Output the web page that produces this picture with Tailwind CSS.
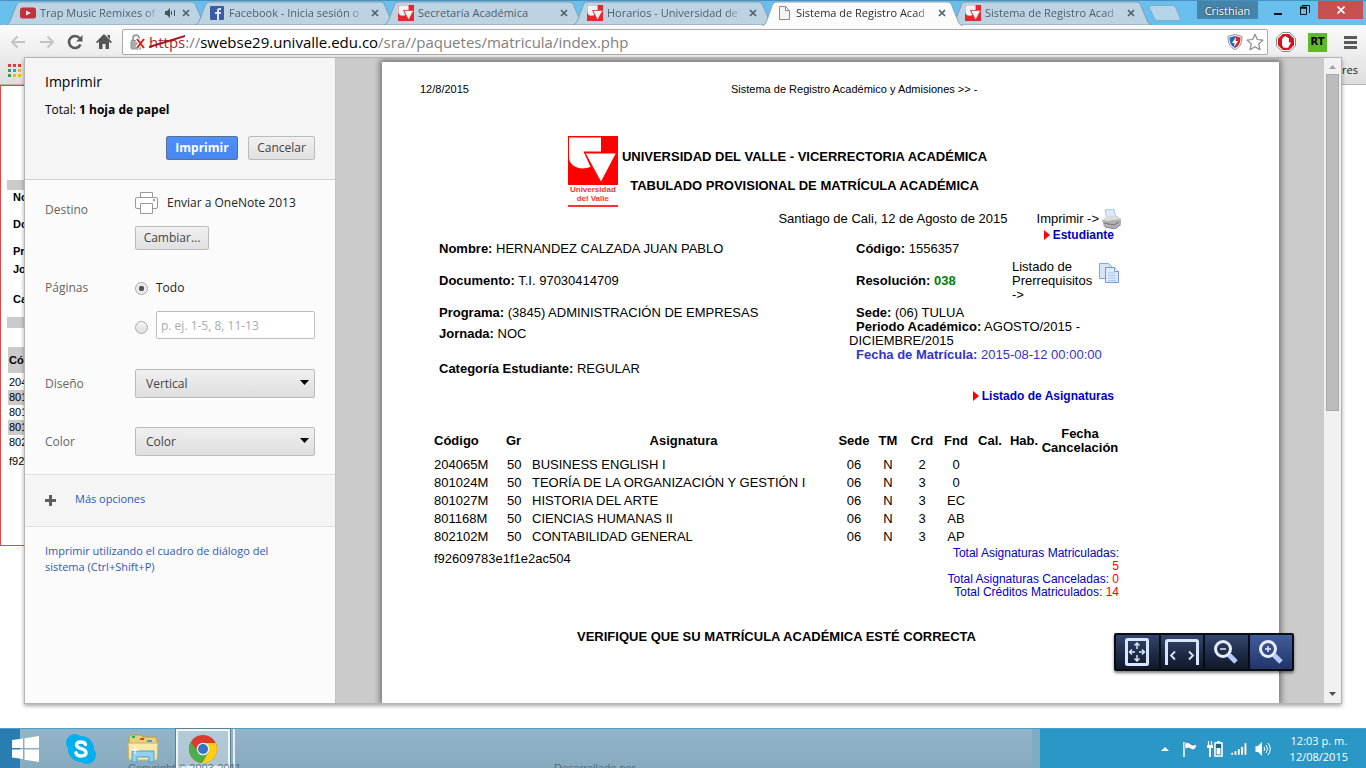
<!DOCTYPE html>
<html lang="es">
<head>
  <meta charset="UTF-8">
  <meta name="viewport" content="width=device-width, initial-scale=1.0">
  <title>Sistema de Registro Académico y Admisiones</title>
  <script src="https://cdn.jsdelivr.net/npm/@tailwindcss/browser@4"></script>
</head>
<body class="relative flex flex-col h-screen overflow-hidden bg-white font-['Open_Sans',sans-serif] text-[12px] text-black">

  <!-- Símbolos compartidos -->
  <svg class="hidden">
    <symbol id="tab-off" viewBox="0 0 201 24" preserveAspectRatio="none">
      <path d="M0 24 C3 23 4 21 5 18 L10 5 C11 2 12 1 15 1 H185 C188 1 189 2 190 5 L196 19 C197 22 198 23 201 24 Z" fill="#bcd3e4" stroke="#7f9fb5"/>
    </symbol>
    <symbol id="tab-on" viewBox="0 0 201 25" preserveAspectRatio="none">
      <path d="M0 25 C3 24 4 22 5 19 L10 5 C11 2 12 1 15 1 H185 C188 1 189 2 190 5 L196 20 C197 23 198 24 201 25 Z" fill="#fbfbfb"/>
      <path d="M0 25 C3 24 4 22 5 19 L10 5 C11 2 12 1 15 1 H185 C188 1 189 2 190 5 L196 20 C197 23 198 24 201 25" fill="none" stroke="#8aa5b6"/>
    </symbol>
    <symbol id="univalle" viewBox="0 0 50 50">
      <rect width="50" height="50" fill="#e8262d"/>
      <path d="M1 1h32v15H16l7 16C10 36 1 31 1 21z" fill="#eef4f8"/>
      <path d="M18 17h31L33 47z" fill="#eef4f8" stroke="#e8262d" stroke-width="2"/>
    </symbol>
    <symbol id="cerrar" viewBox="0 0 8 8">
      <path d="M1 1l6 6M7 1L1 7" stroke="#52606a" stroke-width="1.7"/>
    </symbol>
    <symbol id="lupa" viewBox="0 0 26 26">
      <path d="M16 16l7 7" stroke="#b4cbf8" stroke-width="5"/>
      <circle cx="10" cy="10" r="7.5" fill="none" stroke="#e6edfc" stroke-width="3"/>
    </symbol>
  </svg>

  <!-- Pestañas -->
  <header class="flex h-[25px] shrink-0 border-t border-[#4a90bd] bg-[#68bfee] pl-[6px]">
    <nav class="flex text-[11px] text-[#4f606c]">
      <a href="#" class="relative flex items-center w-[201px] h-6 pl-[14px]">
        <svg class="absolute inset-0 w-full h-full"><use href="#tab-off"/></svg>
        <svg class="relative w-4 h-4 shrink-0" viewBox="0 0 16 16"><rect y="2.500" width="16" height="11" rx="2.500" fill="#c0323a"/><path d="M6 5.500l5 2.500-5 2.500z" fill="#e9dfe4"/></svg>
        <span class="relative ml-1 w-[119px] overflow-hidden whitespace-nowrap [mask-image:linear-gradient(90deg,#000_88%,transparent)]">Trap Music Remixes of</span>
        <svg class="relative ml-[6px] w-[11px] h-[10px]" viewBox="0 0 11 10"><path d="M0 3h2l3-3v10L2 7H0z" fill="#45525c"/><path d="M6.500 3v4M9.500 2v6" stroke="#45525c"/></svg>
        <svg class="relative ml-[6px] w-2 h-2"><use href="#cerrar"/></svg>
      </a>
      <a href="#" class="relative flex items-center w-[201px] h-6 pl-[14px] -ml-3">
        <svg class="absolute inset-0 w-full h-full"><use href="#tab-off"/></svg>
        <svg class="relative w-4 h-4 shrink-0" viewBox="0 0 16 16"><rect x="1" y="1" width="14" height="14" rx="1" fill="#3a5ca5"/><path d="M8 15V9H6V7h2V5.500C8 3.800 9 3 10.500 3H12v2h-1c-.8 0-1 .3-1 1v1h2l-.3 2H10v6z" fill="#dce8f2"/></svg>
        <span class="relative ml-1 w-[136px] overflow-hidden whitespace-nowrap [mask-image:linear-gradient(90deg,#000_88%,transparent)]">Facebook - Inicia sesión o</span>
        <svg class="relative ml-[6px] w-2 h-2"><use href="#cerrar"/></svg>
      </a>
      <a href="#" class="relative flex items-center w-[201px] h-6 pl-[14px] -ml-3">
        <svg class="absolute inset-0 w-full h-full"><use href="#tab-off"/></svg>
        <svg class="relative w-4 h-4 shrink-0"><use href="#univalle"/></svg>
        <span class="relative ml-1 w-[136px] overflow-hidden whitespace-nowrap">Secretaría Académica</span>
        <svg class="relative ml-[6px] w-2 h-2"><use href="#cerrar"/></svg>
      </a>
      <a href="#" class="relative flex items-center w-[201px] h-6 pl-[14px] -ml-3">
        <svg class="absolute inset-0 w-full h-full"><use href="#tab-off"/></svg>
        <svg class="relative w-4 h-4 shrink-0"><use href="#univalle"/></svg>
        <span class="relative ml-1 w-[136px] overflow-hidden whitespace-nowrap [mask-image:linear-gradient(90deg,#000_88%,transparent)]">Horarios - Universidad de</span>
        <svg class="relative ml-[6px] w-2 h-2"><use href="#cerrar"/></svg>
      </a>
      <a href="#" class="relative z-10 flex items-center w-[201px] h-6 pl-[14px] -ml-3 text-[#2b2b2b]">
        <svg class="absolute inset-x-0 top-0 w-full h-[25px]"><use href="#tab-on"/></svg>
        <svg class="relative w-4 h-4 shrink-0" viewBox="0 0 16 16"><path d="M3.500 1.500h6l4 4v9h-10z M9.500 1.500v4h4" fill="#f4f4f4" stroke="#8d8d8d"/></svg>
        <span class="relative ml-1 w-[136px] overflow-hidden whitespace-nowrap [mask-image:linear-gradient(90deg,#000_88%,transparent)]">Sistema de Registro Acad</span>
        <svg class="relative ml-[6px] w-2 h-2"><use href="#cerrar"/></svg>
      </a>
      <a href="#" class="relative flex items-center w-[201px] h-6 pl-[14px] -ml-3">
        <svg class="absolute inset-0 w-full h-full"><use href="#tab-off"/></svg>
        <svg class="relative w-4 h-4 shrink-0"><use href="#univalle"/></svg>
        <span class="relative ml-1 w-[136px] overflow-hidden whitespace-nowrap [mask-image:linear-gradient(90deg,#000_88%,transparent)]">Sistema de Registro Acad</span>
        <svg class="relative ml-[6px] w-2 h-2"><use href="#cerrar"/></svg>
      </a>
      <button aria-label="Nueva pestaña" class="-ml-[3px] self-start mt-1">
        <svg class="w-8 h-4" viewBox="0 0 32 16"><path d="M3 .5h20c2 0 3 1 4 3l4 9c.6 2 0 3-2 3H9c-2 0-3-1-4-3L1 4C.5 2 1 .5 3 .5z" fill="#b4d4e8" stroke="#86abc4"/></svg>
      </button>
    </nav>
    <div class="flex items-start ml-auto pr-[3px]">
      <button class="w-[61px] h-[18px] bg-[#4585ab] text-[11px] leading-[17px] text-white [text-shadow:0_0_2px_#222]">Cristhian</button>
      <button aria-label="Minimizar" class="w-8 h-[18px] ml-1 flex items-center justify-center"><svg class="w-2 h-4" viewBox="0 0 8 16"><path d="M0 11h8v2H0z" fill="#111"/></svg></button>
      <button aria-label="Restaurar" class="w-[22px] h-[18px] flex items-center justify-center"><svg class="w-[10px] h-[10px]" viewBox="0 0 10 10"><path d="M.5 3h6v6.500h-6zM2 .5h7.500V8" fill="none" stroke="#111"/><path d="M0 2.500h7" stroke="#111" stroke-width="2"/></svg></button>
      <button aria-label="Cerrar" class="w-[45px] h-[18px] ml-[2px] bg-[#c75050] flex items-center justify-center"><svg class="w-2 h-2" viewBox="0 0 8 8"><path d="M.5.5l7 7M7.500.5l-7 7" stroke="#fff" stroke-width="1.700"/></svg></button>
    </div>
  </header>

  <!-- Barra de direcciones -->
  <div class="shrink-0 h-[60px] bg-linear-to-b from-[#fbfbfb] to-[#dedede] border-b border-[#b3b3b3]">
    <div class="flex items-center h-[34px] pl-[10px] pr-[9px]">
      <button aria-label="Atrás"><svg class="w-4 h-4" viewBox="0 0 16 16"><path d="M15 8H2M7.500 2.500L2 8l5.500 5.500" fill="none" stroke="#c3c3c3" stroke-width="2"/></svg></button>
      <button aria-label="Adelante" class="ml-[13px]"><svg class="w-4 h-4" viewBox="0 0 16 16"><path d="M1 8h13M8.500 2.500L14 8l-5.500 5.500" fill="none" stroke="#c3c3c3" stroke-width="2"/></svg></button>
      <button aria-label="Recargar" class="ml-3"><svg class="w-4 h-4" viewBox="0 0 16 16"><path d="M13.500 10.500a6 6 0 1 1-.8-6.300" fill="none" stroke="#5a5a5a" stroke-width="2.600"/><path d="M15.500 1v6.500H9z" fill="#5a5a5a"/></svg></button>
      <button aria-label="Inicio" class="ml-[13px]"><svg class="w-4 h-4" viewBox="0 0 16 16"><path d="M8 0l8 8-1.200 1.200L13 7.500V15H9.500v-5h-3v5H3V7.500L1.200 9.200 0 8zM11.500 1H14v4l-2.500-2.500z" fill="#555"/></svg></button>
      <div class="flex flex-1 items-center h-[26px] ml-[10px] pl-[7px] pr-[3px] bg-white border border-[#aaa] rounded-xs">
        <svg class="w-4 h-4" viewBox="0 0 16 16"><path d="M3 7V4.500C3 2.500 4.300 1.200 6 1.200s3 1.300 3 3.300V7" fill="none" stroke="#9a9a9a" stroke-width="1.800"/><rect x="1" y="6.500" width="10" height="8.500" rx="1" fill="#bdbdbd" stroke="#8c8c8c"/><path d="M1 9h10M1 11h10M1 13h10" stroke="#999"/><path d="M7 5l7 9M14 5l-7 9" stroke="#fff" stroke-width="4"/><path d="M7 5l7 9M14 5l-7 9" stroke="#d32118" stroke-width="2"/></svg>
        <div role="textbox" aria-label="Dirección" contenteditable="true" spellcheck="false" class="flex-1 ml-[3px] text-[15px] leading-5 text-[#808080] whitespace-nowrap"><span class="relative text-[#b0262a]">https<svg class="absolute left-0 top-0 w-full h-full" viewBox="0 0 36 20" preserveAspectRatio="none"><path d="M0 15L36 4" stroke="#a3161b" stroke-width="2"/></svg></span>://<span class="text-black">swebse29.univalle.edu.co</span>/sra//paquetes/matricula/index.php</div>
        <svg class="w-4 h-4" viewBox="0 0 16 16"><path d="M8 .5l7 2c0 7-2 11-7 13-5-2-7-6-7-13z" fill="#fff" stroke="#8b8b8b"/><path d="M8 2v12C4 12 2.500 9 2.500 3.500z" fill="#2763c4"/><path d="M8 2v12c4-2 5.500-5 5.500-10.500z" fill="#d92a2a"/><path d="M9 3L5 9h2.500L7 13l4-6H8.500z" fill="#fff"/></svg>
        <button aria-label="Favorito" class="ml-[3px]"><svg class="w-[18px] h-[18px]" viewBox="0 0 18 18"><path d="M9 1.200l2.300 5.300 5.700.6-4.300 3.900 1.300 5.700L9 13.800 4 16.700 5.300 11 1 7.100l5.700-.6z" fill="#fff" stroke="#8a8a8a" stroke-width="1.200" stroke-linejoin="round"/></svg></button>
      </div>
      <button aria-label="Bloqueador" class="ml-2"><svg class="w-5 h-5" viewBox="0 0 20 20"><path d="M6.200.5h7.600l5.700 5.700v7.600l-5.700 5.700H6.200L.5 13.800V6.200z" fill="#fff" stroke="#888"/><path d="M6.800 2h6.400L18 6.800v6.400L13.200 18H6.800L2 13.200V6.800z" fill="#d3131b"/><path d="M6 9V6.500h1.200V5h1.400V4h1.500v1h1.400v1h1.400v5l1-1 1 .8-2.700 5H7.500L6 13z" fill="#fff"/></svg></button>
      <button class="flex items-center justify-center w-[19px] h-[19px] ml-3 bg-[#5fb92a] font-['DejaVu_Sans',sans-serif] text-[10px] leading-3 font-bold text-black">RT</button>
      <button aria-label="Menú" class="ml-[17px]"><svg class="w-[13px] h-[13px]" viewBox="0 0 13 13"><path d="M0 1.500h13M0 6.500h13M0 11.500h13" stroke="#5a5a5a" stroke-width="3"/></svg></button>
    </div>
    <div class="flex items-center justify-between h-[22px] pl-2 pr-2">
      <svg class="w-[13px] h-[13px]" viewBox="0 0 13 13"><path d="M0 0h3v3H0zM5 0h3v3H5zM10 0h3v3h-3z" fill="#e33b3b"/><path d="M0 5h3v3H0zM0 10h3v3H0z" fill="#30a052"/><path d="M5 5h3v3H5z" fill="#3d8bf5"/><path d="M10 5h3v3h-3zM5 10h3v3H5zM10 10h3v3h-3z" fill="#f7b50a"/></svg>
      <a href="#" class="text-[11px] text-[#222]">Otros marcadores</a>
    </div>
  </div>

  <!-- Página de fondo -->
  <main class="flex-1 min-h-0 font-['Liberation_Sans',sans-serif] text-[11px] leading-[15px]">
    <div class="w-3/4 h-[461px] border border-[#e04848] pl-[6px]">
      <div class="mt-[94px] h-[10px] bg-[#cbcbcb]"></div>
      <div class="pl-[6px] font-bold">
        <p>Nombre:</p>
        <p class="mt-3">Documento:</p>
        <p class="mt-3">Programa:</p>
        <p class="mt-[3px]">Jornada:</p>
        <p class="mt-[15px]">Categoría:</p>
      </div>
      <div class="mt-[10px] h-[11px] bg-[#cbcbcb]"></div>
      <div class="ml-px mt-[19px]">
        <p class="h-[26px] pl-px bg-[#cbcbcb] font-bold leading-[26px]">Código</p>
        <p class="mt-[2px] pl-px">204065M</p>
        <p class="pl-px bg-[#cbcbcb]">801024M</p>
        <p class="pl-px">801027M</p>
        <p class="pl-px bg-[#cbcbcb]">801168M</p>
        <p class="pl-px">802102M</p>
        <p class="mt-1 pl-px">f92609783e1f1e2ac504</p>
      </div>
    </div>
  </main>

  <!-- Barra de tareas -->
  <footer class="relative flex items-center h-10 shrink-0 bg-[#2b97c7] border-t border-[#4aa0c8]">
    <div class="absolute left-0 inset-y-0 w-5 bg-[#2a7db0]"></div>
    <div class="absolute left-5 right-[326px] inset-y-0 bg-linear-to-b from-[#93b4c9] to-[#88aabf] border-r-8 border-[#7fabc3]"></div>
    <button aria-label="Inicio" class="relative ml-3"><svg class="w-[27px] h-[26px]" viewBox="0 0 27 26"><path d="M0 4l11-1.500V12H0zM12.500 2.300L27 0v12H12.500zM0 13.500h11V23L0 21.500zM12.500 13.500H27V26l-14.500-2.300z" fill="#fff"/></svg></button>
    <button aria-label="Skype" class="relative ml-[27px]"><svg class="w-[30px] h-[30px]" viewBox="0 0 30 30"><circle cx="9" cy="9" r="9" fill="#00aff0"/><circle cx="21" cy="21" r="9" fill="#00aff0"/><circle cx="15" cy="15" r="13" fill="#00aff0"/><path d="M19.500 10.500C19 9 17.500 8 15 8c-2.700 0-4.500 1.200-4.500 3 0 4.500 9.500 2.500 9.500 7.500 0 2.300-2.200 3.500-5 3.500s-4.500-1.200-5-3.200" fill="none" stroke="#fff" stroke-width="3.400" stroke-linecap="round"/></svg></button>
    <button aria-label="Explorador de archivos" class="relative ml-[31px]"><svg class="w-8 h-[30px]" viewBox="0 0 32 30"><path d="M2 3l2-2h10l2 2h13l1 2v20H2z" fill="#e7cf7c" stroke="#b99b45"/><path d="M5 2h3v2H5z" fill="#22b14c"/><path d="M13 4h4v2h-4z" fill="#d34a2a"/><path d="M20 6h5v2h-5z" fill="#3a9fe0"/><path d="M1 9h30l-1 17H2z" fill="#f8e9a8" stroke="#cdb263"/><path d="M5 17h22v11h-5v-5H10v5H5z" fill="#8fd0ee" stroke="#4f9fc8"/><path d="M8 12v8M4 16h8" stroke="#fff"/></svg></button>
    <button aria-label="Google Chrome" class="relative flex items-center justify-center w-[54px] h-full ml-[17px] border-2 border-white/80 bg-white/30 outline outline-[#5d7f93]"><svg class="w-7 h-7" viewBox="0 0 28 28"><circle cx="14" cy="14" r="14" fill="#db3a2d"/><path d="M14 8h12.600A14 14 0 0 1 13 28l6.200-11z" fill="#fdcf12"/><path d="M2 7l6.800 10L14 20l-1.500 8A14 14 0 0 1 2 7z" fill="#4cae4a"/><path d="M19.500 17L13 28l-2-1 3-7z" fill="#4cae4a"/><circle cx="14" cy="14" r="6.300" fill="#f2f2f2"/><circle cx="14" cy="14" r="5" fill="#3474c0"/></svg></button>
    <span class="relative w-[5px] h-full border-r-2 border-white/80"></span>
    <div class="absolute inset-x-0 bottom-0 h-2 overflow-hidden text-[11px] leading-4 text-[#2f4f66]/70 font-['Liberation_Sans',sans-serif]">
      <div class="flex"><span class="w-[426px] ml-32">Copyright © 2003-2011</span><span>Desarrollado por</span></div>
    </div>
    <div class="relative flex items-center ml-auto pr-[18px] text-white">
      <svg class="w-2 h-2" viewBox="0 0 8 8"><path d="M4 2l4 4H0z" fill="#fff"/></svg>
      <svg class="ml-[13px] w-4 h-4" viewBox="0 0 16 16"><path d="M2 1v15" stroke="#fff" stroke-width="1.500"/><path d="M3 2c3-1 4 0 6 1.500s4 0 6 0c-1 2-1 4-3 5s-3-1-5-1.500S4 8 3 8z" fill="#fff" stroke="#1d5f80" stroke-width=".5"/></svg>
      <svg class="ml-[9px] w-4 h-4" viewBox="0 0 16 16"><path d="M1.500 0v4M4.500 0v4" stroke="#fff" stroke-width="1.200"/><path d="M0 4h6v3H4v9H2V7H0z" fill="#fff"/><rect x="8" y="2" width="7" height="13" fill="#1c6688" stroke="#fff" stroke-width="1.600"/><path d="M10 0h3v2h-3zM9.500 7h4v6.500h-4z" fill="#fff"/></svg>
      <svg class="ml-2 w-4 h-3" viewBox="0 0 16 12"><path d="M0 9.500h2.500V12H0zM3.200 8h2.500v4H3.200zM6.500 6H9v6H6.500zM9.800 3.500h2.500V12H9.800zM13.200 0h2.500v12h-2.500z" fill="#fff" stroke="#1c6688" stroke-width=".4"/></svg>
      <svg class="ml-2 w-4 h-4" viewBox="0 0 16 16"><path d="M.500 5h2.500l4-4v14l-4-4H.500z" fill="#fff"/><path d="M9 6q1.500 2 0 4M11 4q3 4 0 8M13 2q4.500 6 0 12" fill="none" stroke="#fff"/></svg>
      <div class="ml-[19px] text-center text-[11px] leading-4">
        <p>12:03 p. m.</p>
        <p>12/08/2015</p>
      </div>
    </div>
  </footer>

  <!-- Diálogo de impresión -->
  <div role="dialog" aria-label="Imprimir" class="absolute inset-x-6 top-[57px] bottom-16 flex border border-[#b4b4b4] bg-[#cbcbcb] shadow-[0_2px_4px_rgba(0,0,0,0.35)]">
    <!-- Opciones -->
    <form class="flex flex-col w-[311px] shrink-0 border-r border-[#c2c2c2] bg-[#fbfbfb]">
      <div class="h-[122px] px-5 bg-[#f5f5f5] border-b border-[#cfcfcf]">
        <h1 class="pt-[14px] text-[14px] leading-5">Imprimir</h1>
        <p class="mt-[10px] leading-4">Total: <b>1 hoja de papel</b></p>
        <div class="flex justify-end mt-[18px] gap-[10px]">
          <button type="button" class="w-[72px] h-6 rounded-xs border border-[#5a6f9a] bg-linear-to-b from-[#4d90fe] to-[#4787ed] font-bold text-white">Imprimir</button>
          <button type="button" class="w-[67px] h-6 rounded-xs border border-[#bbb] bg-linear-to-b from-[#f0f0f0] to-[#e0e0e0] text-[#444]">Cancelar</button>
        </div>
      </div>
      <div class="grid grid-cols-[90px_1fr] px-5 h-[294px] content-start leading-4 text-[#666]">
        <span class="pt-[22px]">Destino</span>
        <div class="h-[87px] pt-3 text-[#222]">
          <div class="flex items-center">
            <svg class="w-[23px] h-[22px]" viewBox="0 0 23 22"><g fill="#fff" stroke="#999"><path d="M5.500 5.500v-5h12v5"/><rect x=".5" y="5.500" width="22" height="11" rx="1.500"/><path d="M5.500 11.500h12v10h-12z"/></g><path d="M18 8h2" stroke="#999" stroke-width="2"/></svg>
            <span class="ml-[9px]">Enviar a OneNote 2013</span>
          </div>
          <button type="button" class="w-[74px] h-6 mt-3 rounded-xs border border-[#bbb] bg-linear-to-b from-[#f0f0f0] to-[#e0e0e0] text-[#444]">Cambiar...</button>
        </div>
        <span class="pt-[13px]">Páginas</span>
        <div class="h-[103px] pt-[13px] text-[#222]">
          <label class="flex items-center h-4"><input type="radio" name="paginas" checked class="appearance-none w-[13px] h-[13px] rounded-full border border-[#aaa] bg-[#eee] checked:bg-[radial-gradient(circle,#555_2.5px,#ececec_3px)]"><span class="ml-2">Todo</span></label>
          <div class="flex items-center mt-[15px]">
            <input type="radio" name="paginas" aria-label="Intervalo" class="appearance-none w-[13px] h-[13px] shrink-0 mt-1 rounded-full border border-[#aaa] bg-linear-to-b from-[#f4f4f4] to-[#dedede]">
            <input type="text" aria-label="Intervalo de páginas" placeholder="p. ej. 1-5, 8, 11-13" class="w-full h-7 ml-2 px-1 rounded-xs border border-[#bfbfbf] bg-white placeholder:text-[#aaa]">
          </div>
        </div>
        <label for="diseno" class="pt-[6px]">Diseño</label>
        <div class="relative h-[59px] -mt-px">
          <select id="diseno" class="appearance-none w-full h-[29px] px-[10px] rounded-xs border border-[#bbb] bg-linear-to-b from-[#f0f0f0] to-[#dedede] text-[#444]"><option>Vertical</option><option>Horizontal</option></select>
          <svg class="absolute right-[6px] top-[11px] w-[9px] h-[5px] pointer-events-none" viewBox="0 0 9 5"><path d="M0 0h9L4.500 5z" fill="#000"/></svg>
        </div>
        <label for="color" class="pt-[6px]">Color</label>
        <div class="relative -mt-px">
          <select id="color" class="appearance-none w-full h-[29px] px-[10px] rounded-xs border border-[#bbb] bg-linear-to-b from-[#f0f0f0] to-[#dedede] text-[#444]"><option>Color</option><option>Blanco y negro</option></select>
          <svg class="absolute right-[6px] top-[11px] w-[9px] h-[5px] pointer-events-none" viewBox="0 0 9 5"><path d="M0 0h9L4.500 5z" fill="#000"/></svg>
        </div>
      </div>
      <div class="flex items-center h-[53px] px-5 bg-[#f5f5f5] border-y border-[#e0e0e0]">
        <svg class="w-[11px] h-[11px]" viewBox="0 0 11 11"><path d="M4 0h3v4h4v3H7v4H4V7H0V4h4z" fill="#5f5f5f"/></svg>
        <a href="#" class="ml-[19px] -mt-1 text-[11px] leading-4 text-[#3058b8]">Más opciones</a>
      </div>
      <a href="#" class="mx-5 mt-4 w-60 text-[11px] leading-4 text-[#3058b8]">Imprimir utilizando el cuadro de diálogo del sistema (Ctrl+Shift+P)</a>
    </form>

    <!-- Vista previa -->
    <div class="relative flex-1 min-w-0 pl-[46px] pr-[45px] pt-1 overflow-hidden">
      <article class="h-full bg-white shadow-[0_0_6px_2px_rgba(0,0,0,0.45)] font-['Liberation_Sans',sans-serif] text-[13px] leading-[14px]">
        <div class="flex h-[74px] pt-5 pl-[38px] text-[11px]"><span class="w-[311px]">12/8/2015</span><span>Sistema de Registro Académico y Admisiones &gt;&gt; -</span></div>
        <div class="ml-[52px] w-[685px]">
          <div class="flex justify-center gap-1 pl-[2px]">
            <div class="w-[50px] text-center text-[8px] leading-[9px] font-bold text-[#f33]">
              <svg class="w-[50px] h-[49px]" viewBox="0 0 50 49"><rect width="50" height="49" fill="#f00"/><path d="M1 1.500h32v14H15.500l7 15.500C11 35 1 30 1 21z" fill="#fff"/><path d="M17 17h31.500L33 46.500z" fill="#fff" stroke="#f00"/></svg>
              <p>Universidad<br>del Valle</p>
              <div class="h-[2px] mt-[2px] bg-[#f33]"></div>
            </div>
            <div class="pt-[14px] text-center font-bold">
              <p>UNIVERSIDAD DEL VALLE - VICERRECTORIA ACADÉMICA</p>
              <p class="mt-[15px]">TABULADO PROVISIONAL DE MATRÍCULA ACADÉMICA</p>
            </div>
          </div>
          <div class="flex items-center justify-end h-[18px] mt-[3px]">
            <span>Santiago de Cali, 12 de Agosto de 2015</span>
            <span class="ml-[29px]">Imprimir -&gt;</span>
            <svg class="ml-[3px] -mr-[2px] w-[19px] h-5" viewBox="0 0 19 20"><path d="M3 1l9-1 2 9-9 2z" fill="#d9ebfa" stroke="#8fb6d8" stroke-width=".7"/><path d="M0 11l5-3 10-1 4 3v6l-6 4-11-2z" fill="#b0b0b0"/><path d="M0 11l6 1 13-2-5-3-10 1z" fill="#dcdcdc"/><path d="M2 14l10 2 5-3" fill="none" stroke="#777"/><path d="M3 18l10 2 5-4" fill="none" stroke="#8a8a8a"/></svg>
          </div>
          <div class="flex items-center justify-end h-[14px] pr-[5px] font-bold text-[12px] text-[#0000c8]">
            <svg class="w-[6px] h-[10px] mr-[3px]" viewBox="0 0 6 10"><path d="M0 0l6 5-6 5z" fill="#f00"/></svg>Estudiante
          </div>
          <div class="flex h-[147px]">
            <div class="w-[415px] pl-[5px]">
              <p><b>Nombre:</b> HERNANDEZ CALZADA JUAN PABLO</p>
              <p class="mt-[18px]"><b>Documento:</b> T.I. 97030414709</p>
              <p class="mt-[18px]"><b>Programa:</b> (3845) ADMINISTRACIÓN DE EMPRESAS</p>
              <p class="mt-[7px]"><b>Jornada:</b> NOC</p>
              <p class="mt-[21px]"><b>Categoría Estudiante:</b> REGULAR</p>
            </div>
            <div class="flex-1">
              <p class="pl-[7px]"><b>Código:</b> 1556357</p>
              <div class="flex items-center h-[42px] mt-1">
                <p class="pl-[7px] w-[163px]"><b>Resolución:</b> <b class="text-[#008000]">038</b></p>
                <p class="w-[82px]">Listado de Prerrequisitos -&gt;</p>
                <svg class="ml-[5px] mt-[2px] w-5 h-[22px] self-start" viewBox="0 0 20 22"><path d="M.500 1.500h9l3 3v12h-12z" fill="#d5e6fb" stroke="#7fa8e0"/><path d="M6.500 5.500h9l4 4v11h-13z" fill="#deebfc" stroke="#6d9adb"/><path d="M15.500 5.500v4h4" fill="#fff" stroke="#6d9adb"/><path d="M9 11h7M9 13.500h8M9 16h8M9 18.500h8" stroke="#a9c7ef"/></svg>
              </div>
              <p class="mt-1 pl-[7px]"><b>Sede:</b> (06) TULUA</p>
              <p class="indent-[7px]"><b>Periodo Académico:</b> AGOSTO/2015 - DICIEMBRE/2015</p>
              <p class="pl-[7px] text-[#3333cc]"><b>Fecha de Matrícula:</b> 2015-08-12 00:00:00</p>
            </div>
          </div>
          <div class="flex items-center justify-end h-[14px] pr-[5px] font-bold text-[12px] text-[#0000c8]">
            <svg class="w-[6px] h-[10px] mr-[3px]" viewBox="0 0 6 10"><path d="M0 0l6 5-6 5z" fill="#f00"/></svg>Listado de Asignaturas
          </div>

          <table class="w-full mt-[23px] table-fixed text-center">
            <colgroup><col class="w-[72px]"><col class="w-6"><col><col class="w-[34px]"><col class="w-[34px]"><col class="w-[34px]"><col class="w-[34px]"><col class="w-[34px]"><col class="w-[34px]"><col class="w-[78px]"></colgroup>
            <thead>
              <tr class="h-[30px]"><th class="text-left">Código</th><th class="text-left">Gr</th><th>Asignatura</th><th>Sede</th><th>TM</th><th>Crd</th><th>Fnd</th><th>Cal.</th><th>Hab.</th><th>Fecha Cancelación</th></tr>
            </thead>
            <tbody>
              <tr class="h-[18px]"><td class="text-left">204065M</td><td class="text-left pl-px">50</td><td class="text-left pl-[2px]">BUSINESS ENGLISH I</td><td>06</td><td>N</td><td>2</td><td>0</td><td></td><td></td><td></td></tr>
              <tr class="h-[18px]"><td class="text-left">801024M</td><td class="text-left pl-px">50</td><td class="text-left pl-[2px]">TEORÍA DE LA ORGANIZACIÓN Y GESTIÓN I</td><td>06</td><td>N</td><td>3</td><td>0</td><td></td><td></td><td></td></tr>
              <tr class="h-[18px]"><td class="text-left">801027M</td><td class="text-left pl-px">50</td><td class="text-left pl-[2px]">HISTORIA DEL ARTE</td><td>06</td><td>N</td><td>3</td><td>EC</td><td></td><td></td><td></td></tr>
              <tr class="h-[18px]"><td class="text-left">801168M</td><td class="text-left pl-px">50</td><td class="text-left pl-[2px]">CIENCIAS HUMANAS II</td><td>06</td><td>N</td><td>3</td><td>AB</td><td></td><td></td><td></td></tr>
              <tr class="h-[18px]"><td class="text-left">802102M</td><td class="text-left pl-px">50</td><td class="text-left pl-[2px]">CONTABILIDAD GENERAL</td><td>06</td><td>N</td><td>3</td><td>AP</td><td></td><td></td><td></td></tr>
            </tbody>
          </table>
          <div class="flex justify-between">
            <p class="pt-[6px]">f92609783e1f1e2ac504</p>
            <div class="w-[180px] pt-px text-right text-[12px] leading-[13px] text-[#0000c8]">
              <p>Total Asignaturas Matriculadas:<br><span class="text-[#f00]">5</span></p>
              <p>Total Asignaturas Canceladas: <span class="text-[#f00]">0</span></p>
              <p>Total Créditos Matriculados: <span class="text-[#f00]">14</span></p>
            </div>
          </div>
          <p class="mt-[31px] text-center font-bold">VERIFIQUE QUE SU MATRÍCULA ACADÉMICA ESTÉ CORRECTA</p>
        </div>
      </article>
      <!-- Controles de zoom -->
      <div class="absolute right-[30px] bottom-8 flex w-[180px] h-[38px] border-2 border-[#0b0d14] rounded-xs bg-[#0b0d14] gap-[2px] shadow-[0_2px_3px_rgba(0,0,0,0.5)]">
        <button type="button" aria-label="Ajustar página" class="flex flex-1 items-center justify-center bg-linear-to-b from-[#33466f] to-[#101828]"><svg class="w-6 h-7" viewBox="0 0 24 28"><rect x="1.500" y="1.500" width="21" height="25" rx="1" fill="none" stroke="#d9e5fc" stroke-width="3"/><path d="M12 5v6M9.500 7.500L12 5l2.500 2.500M12 17v6M9.500 20.500L12 23l2.500-2.500M10 14H5M7 11.500L4.500 14 7 16.500M14 14h5M17 11.500l2.500 2.500-2.500 2.500" fill="none" stroke="#d9e5fc" stroke-width="1.500"/></svg></button>
        <button type="button" aria-label="Ajustar ancho" class="flex flex-1 items-center justify-center bg-linear-to-b from-[#33466f] to-[#101828]"><svg class="w-[34px] h-[27px]" viewBox="0 0 34 27"><path d="M1.500 26V3q0-1.500 1.500-1.500h28q1.500 0 1.500 1.500v23" fill="none" stroke="#d9e5fc" stroke-width="3"/><path d="M10 12.500L6 16.500l4 4M24 12.500l4 4-4 4" fill="none" stroke="#d9e5fc" stroke-width="1.800"/></svg></button>
        <button type="button" aria-label="Alejar" class="flex flex-1 items-center justify-center bg-linear-to-b from-[#33466f] to-[#101828]"><svg class="w-[26px] h-[26px]" viewBox="0 0 26 26"><use href="#lupa"/><path d="M7 10h6" stroke="#e6edfc" stroke-width="1.500"/></svg></button>
        <button type="button" aria-label="Acercar" class="flex flex-1 items-center justify-center bg-linear-to-b from-[#425d9c] to-[#22356a]"><svg class="w-[26px] h-[26px]" viewBox="0 0 26 26"><use href="#lupa"/><path d="M7 10h6M10 7v6" stroke="#e6edfc" stroke-width="1.500"/></svg></button>
      </div>
    </div>

    <!-- Barra de desplazamiento -->
    <div class="flex flex-col items-center w-[17px] shrink-0 bg-[#f1f1f1]">
      <svg class="w-[7px] h-4" viewBox="0 0 7 16"><path d="M0 11h7L3.500 7z" fill="#a3a3a3"/></svg>
      <div class="w-[13px] h-[337px] bg-[#bcbcbc] border border-[#a8a8a8]"></div>
      <svg class="mt-auto w-[7px] h-[18px]" viewBox="0 0 7 18"><path d="M0 7h7L3.500 11z" fill="#505050"/></svg>
    </div>
  </div>

</body>
</html>
